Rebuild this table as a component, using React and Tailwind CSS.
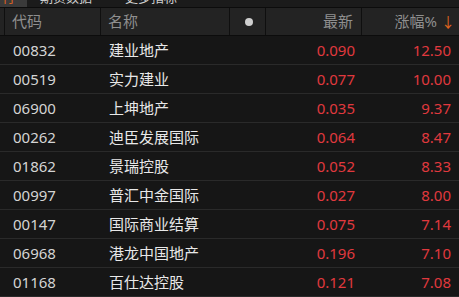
import React from "react";

const rows = [
  ["00832", "建业地产", "0.090", "12.50"],
  ["00519", "实力建业", "0.077", "10.00"],
  ["06900", "上坤地产", "0.035", "9.37"],
  ["00262", "迪臣发展国际", "0.064", "8.47"],
  ["01862", "景瑞控股", "0.052", "8.33"],
  ["00997", "普汇中金国际", "0.027", "8.00"],
  ["00147", "国际商业结算", "0.075", "7.14"],
  ["06968", "港龙中国地产", "0.196", "7.10"],
  ["01168", "百仕达控股", "0.121", "7.08"],
];

const font = { fontFamily: '"Noto Sans", "Noto Sans CJK SC", sans-serif' };

export default function App() {
  return (
    <div className="w-[459px] h-[297px] overflow-hidden bg-[#161616]" style={font}>
      <div className="h-[7px] overflow-hidden flex bg-[#1b1b1b]">
        <div className="w-[27px] bg-[#3a3a3a] relative overflow-hidden">
          <span className="absolute left-[2px] top-[-12px] text-[13px] text-[#e0641e]">行</span>
        </div>
        <div className="relative flex-1 overflow-hidden">
          <span className="absolute left-[13px] top-[-12px] text-[13px] text-[#cfcfcf]">期货数据</span>
          <span className="absolute left-[98px] top-[-12px] text-[13px] text-[#cfcfcf]">更多指标</span>
        </div>
      </div>
      <div className="h-[1px] bg-[#0c0c0c]" />
      <div className="grid grid-cols-[5px_96px_129px_36px_96px_97px] h-[28px] bg-[#232323] border-b border-[#0c0c0c] text-[15px] text-[#8f8f8f]">
        <div className="border-r border-[#0f0f0f]" />
        <div className="border-r border-[#0f0f0f] flex items-center pl-[7px]">代码</div>
        <div className="border-r border-[#0f0f0f] flex items-center pl-[7px]">名称</div>
        <div className="border-r border-[#0f0f0f] flex items-center justify-center pl-[2px]">
          <div className="w-[8px] h-[8px] rounded-full bg-[#cfcfcf]" />
        </div>
        <div className="border-r border-[#0f0f0f] flex items-center justify-end pr-[8px]">最新</div>
        <div className="flex items-center justify-end pr-[4px]">
          涨幅%<span className="ml-[4px] text-[#e0641e] text-[14px]">↓</span>
        </div>
      </div>
      {rows.map(([code, name, price, pct]) => (
        <div
          key={code}
          className="grid grid-cols-[5px_96px_129px_36px_96px_97px] h-[29px] border-b border-[#2a2a2a] text-[15px] items-center"
        >
          <div />
          <div className="pl-[8px] text-[#d4d4d4]">{code}</div>
          <div className="pl-[8px] text-[#e8e8e8]">{name}</div>
          <div />
          <div className="text-right pr-[7px] text-[#e0393e]">{price}</div>
          <div className="text-right pr-[8px] text-[#e0393e]">{pct}</div>
        </div>
      ))}
    </div>
  );
}
